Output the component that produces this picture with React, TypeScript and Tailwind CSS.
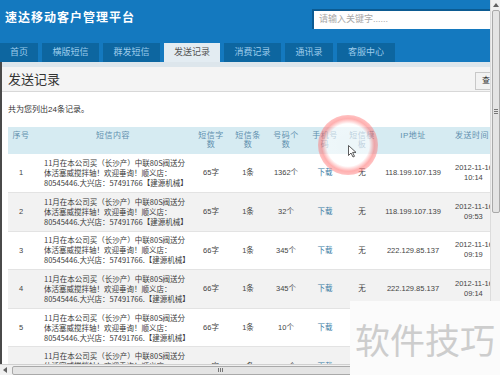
import React from "react";

const rows = [
  { n: "1", tail: "57491766【建源机械】", c: "65字", t: "1条", num: "1362个", ip: "118.199.107.139", d: "2012-11-16", tm: "10:14" },
  { n: "2", tail: "57491766【建源机械】", c: "65字", t: "1条", num: "32个", ip: "118.199.107.139", d: "2012-11-16", tm: "09:53" },
  { n: "3", tail: "57491766.【建源机械】", c: "66字", t: "1条", num: "345个", ip: "222.129.85.137", d: "2012-11-16", tm: "09:19" },
  { n: "4", tail: "57491766.【建源机械】", c: "66字", t: "1条", num: "345个", ip: "222.129.85.137", d: "2012-11-16", tm: "09:14" },
  { n: "5", tail: "57491766.【建源机械】", c: "66字", t: "1条", num: "10个", ip: "222.129.85.137", d: "2012-11-16", tm: "09:10" },
  { n: "6", tail: "57491766.【建源机械】", c: "66字", t: "1条", num: "100个", ip: "222.129.85.137", d: "2012-11-16", tm: "09:02" },
];

const tabs = [
  { label: "首页", w: "w-[38px]" },
  { label: "横版短信", w: "w-[57px]" },
  { label: "群发短信", w: "w-[57px]" },
  { label: "发送记录", w: "w-[56px]", active: true },
  { label: "消费记录", w: "w-[57px]" },
  { label: "通讯录", w: "w-[48px]" },
  { label: "客服中心", w: "w-[58px]" },
];

export default function App() {
  return (
    <div className="relative w-[500px] h-[375px] overflow-hidden bg-white font-['Liberation_Sans','Noto_Sans_CJK_SC',sans-serif] text-[#444]">
      <div className="flex h-[364px]">
        {/* main page */}
        <div className="w-[490px] h-full flex flex-col overflow-hidden">
          {/* header */}
          <div className="h-[43px] bg-[#1479bf] flex items-start shrink-0">
            <div className="pl-[5px] pt-[9px] text-white text-[12px] leading-[16px] font-bold tracking-[1px] font-['Noto_Sans_CJK_SC',serif]">
              速达移动客户管理平台
            </div>
            <div className="ml-auto mt-[9px] w-[178px] h-[20px] bg-white border-l-2 border-t-2 border-[#0c5b92] flex items-center pl-[5px] text-[9px] text-[#a8a8a8]">
              请输入关键字......
            </div>
          </div>
          {/* tabs */}
          <div className="h-[19px] bg-[#1479bf] flex gap-[4px] shrink-0">
            {tabs.map((t) => (
              <div
                key={t.label}
                className={`${t.w} h-full flex items-center justify-center text-[9px] ${
                  t.active ? "bg-[#e3ecf2] text-[#555]" : "bg-[#0d66a0] text-[#9ccbeb]"
                }`}
              >
                {t.label}
              </div>
            ))}
          </div>
          {/* body */}
          <div className="flex-1 flex flex-col border-l-2 border-[#4a4a4a] overflow-hidden">
            <div className="h-[5px] bg-[#dde6ec] shrink-0" />
            <div className="h-[25px] bg-[#f4f4f4] border-b border-[#d8d8d8] flex items-center pl-[6px] shrink-0">
              <span className="text-[13px] text-[#333] font-['Noto_Sans_CJK_SC',sans-serif]">发送记录</span>
              <div className="ml-auto mt-[4px] w-[15px] h-[18px] bg-[#f2f2f2] border border-r-0 border-[#c8c8c8] flex items-center pl-[6px] text-[8px] text-[#333]">
                查
              </div>
            </div>
            <div className="pl-[6px] pt-[13px] text-[8px] leading-[10px] text-[#333] shrink-0">共为您列出24条记录。</div>
            <div className="pl-[6px] pt-[12px]">
              <table className="table-fixed border-collapse w-[492px] text-[7.5px]">
                <colgroup>
                  <col className="w-[26px]" />
                  <col className="w-[158px]" />
                  <col className="w-[38px]" />
                  <col className="w-[36px]" />
                  <col className="w-[40px]" />
                  <col className="w-[38px]" />
                  <col className="w-[36px]" />
                  <col className="w-[66px]" />
                  <col className="w-[54px]" />
                </colgroup>
                <thead>
                  <tr className="h-[27px] bg-[#d6ebf2] text-[#5f8fae] text-[8px] leading-[9px] tracking-[0.5px]">
                    <th className="align-top pt-[4px] font-normal">序号</th>
                    <th className="align-top pt-[4px] font-normal">短信内容</th>
                    <th className="align-top pt-[4px] font-normal">短信字<br />数</th>
                    <th className="align-top pt-[4px] font-normal">短信条<br />数</th>
                    <th className="align-top pt-[4px] font-normal">号码个<br />数</th>
                    <th className="align-top pt-[4px] font-normal">手机号<br />码</th>
                    <th className="align-top pt-[4px] font-normal">短信模<br />板</th>
                    <th className="align-top pt-[4px] font-normal">IP地址</th>
                    <th className="align-top pt-[4px] font-normal whitespace-nowrap text-left pl-[9px]">发送时间</th>
                  </tr>
                </thead>
                <tbody>
                  {rows.map((r, i) => (
                    <tr key={r.n} className={`h-[38.6px] border-b border-[#e3e3e3] ${i % 2 === 1 ? "bg-[#f2f2f2]" : "bg-white"}`}>
                      <td className="text-center">{r.n}</td>
                      <td className="pl-[10px] leading-[10px] whitespace-nowrap text-[#3a3a3a] font-['Noto_Sans_CJK_SC',sans-serif]">
                        <div>11月在本公司买（长沙产）中联80S阀送分</div>
                        <div>体活塞威搅拌轴！欢迎垂询！顺义店：</div>
                        <div>80545446.大兴店：{r.tail}</div>
                      </td>
                      <td className="text-center">{r.c}</td>
                      <td className="text-center">{r.t}</td>
                      <td className="text-center">{r.num}</td>
                      <td className="text-center text-[#3a7ca5]">下载</td>
                      <td className="text-center">无</td>
                      <td className="text-center">{r.ip}</td>
                      <td className="text-left pl-[9px] leading-[10px] whitespace-nowrap">
                        <div>{r.d}</div>
                        <div className="pl-[9px]">{r.tm}</div>
                      </td>
                    </tr>
                  ))}
                </tbody>
              </table>
            </div>
          </div>
        </div>
        {/* vertical scrollbar */}
        <div className="w-[10px] h-full bg-[#f0f0f0] border-l border-[#dcdcdc] flex flex-col items-center">
          <div className="h-[10px] flex items-center justify-center">
            <svg width="6" height="4" viewBox="0 0 6 4"><path d="M0 4 L3 0 L6 4 Z" fill="#606060" /></svg>
          </div>
          <div className="w-[8px] h-[203px] bg-[#e4e4e4] border border-[#a9a9a9] rounded-[2px] flex flex-col items-center justify-center gap-[1px]">
            <div className="w-[4px] h-px bg-[#777]" />
            <div className="w-[4px] h-px bg-[#777]" />
            <div className="w-[4px] h-px bg-[#777]" />
          </div>
        </div>
      </div>
      {/* horizontal scrollbar */}
      <div className="h-[11px] bg-[#f0f0f0] border-t border-[#d0d0d0] flex items-center">
        <div className="w-[10px] flex items-center justify-center">
          <svg width="4" height="6" viewBox="0 0 4 6"><path d="M4 0 L0 3 L4 6 Z" fill="#606060" /></svg>
        </div>
        <div className="ml-[2px] w-[416px] h-[9px] bg-[#e4e4e4] border border-[#a9a9a9] rounded-[2px] flex items-center justify-center gap-[1px]">
          <div className="w-px h-[4px] bg-[#777]" />
          <div className="w-px h-[4px] bg-[#777]" />
          <div className="w-px h-[4px] bg-[#777]" />
        </div>
      </div>

      {/* cursor highlight */}
      <div className="absolute left-[318px] top-[115px] w-[60px] h-[60px] rounded-full bg-[radial-gradient(circle,rgba(255,255,255,0.55)_0%,rgba(255,255,255,0.6)_50%,rgba(255,110,110,0.55)_62%,rgba(255,140,140,0)_100%)]" />
      <svg className="absolute left-[348px] top-[145px]" width="9" height="13" viewBox="0 0 9 13">
        <path d="M0.5 0.5 L0.5 10.5 L3 8 L5 12 L6.5 11.3 L4.6 7.4 L8 7.4 Z" fill="white" stroke="#333" strokeWidth="0.8" />
      </svg>

      {/* watermark */}
      <div className="absolute left-[350px] top-[301px] w-[150px] h-[74px] bg-[#fbfbfb] flex items-center justify-center text-[35px] leading-none text-[#cdcdcd] font-['Noto_Sans_CJK_SC',sans-serif]">
        软件技巧
      </div>
    </div>
  );
}
